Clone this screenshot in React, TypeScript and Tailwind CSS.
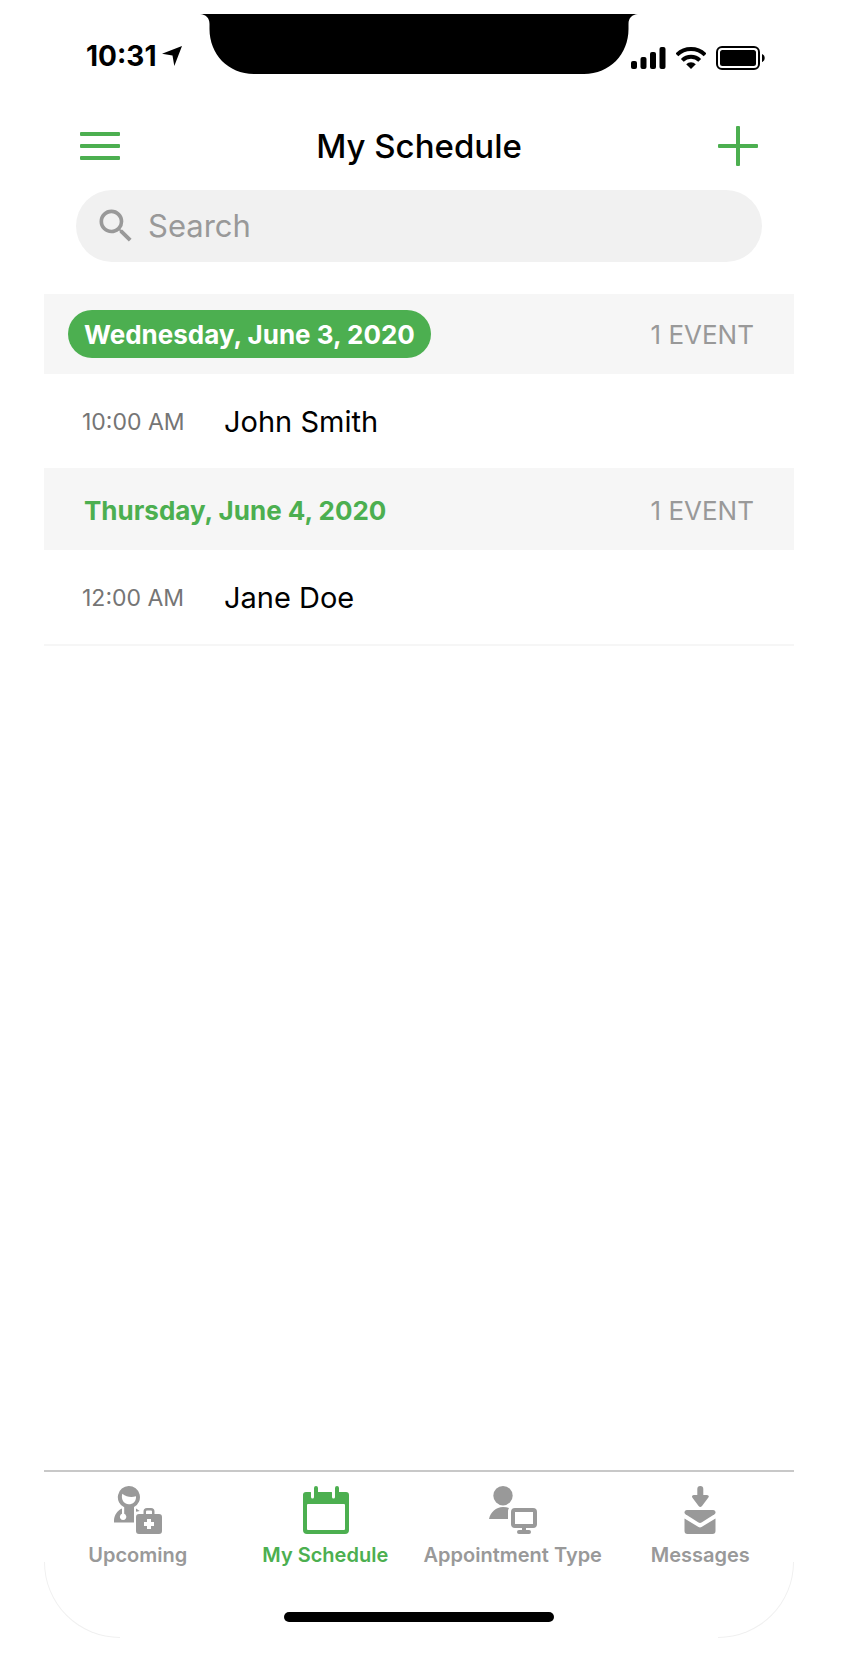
import type { ReactNode } from "react";
import { MdSearch } from "react-icons/md";

type Day = { label: string; today: boolean; events: { time: string; name: string }[] };

const days: Day[] = [
  { label: "Wednesday, June 3, 2020", today: true, events: [{ time: "10:00 AM", name: "John Smith" }] },
  { label: "Thursday, June 4, 2020", today: false, events: [{ time: "12:00 AM", name: "Jane Doe" }] },
];

function Notch() {
  return (
    <svg className="absolute top-0 left-1/2 h-[60px] w-[438px] -translate-x-1/2" viewBox="0 0 438 60" aria-hidden="true">
      <path d="M0 0H438C432 .5 428.500 4 428.500 10V15C428.500 40 410 60 384 60H54C28 60 9.500 40 9.500 15V10C9.500 4 6 .5 0 0Z" />
    </svg>
  );
}

function StatusBar() {
  return (
    <div className="relative flex h-20 items-center justify-between pt-1 pr-7 pl-[42px]">
      <Notch />
      <div className="flex items-center gap-1.5">
        <span className="text-[28px] leading-9 font-bold">10:31</span>
        <svg width="20" height="20" viewBox="0 0 20 20" aria-label="Location in use">
          <path d="M20 0 12.300 20 10.500 9.500 0 7.700Z" />
        </svg>
      </div>
      <div className="flex items-center gap-2.5 pt-1">
        <svg width="35" height="22" viewBox="0 0 35 22" aria-label="Signal">
          <rect x="0" y="14" width="6" height="8" rx="2" />
          <rect x="9.500" y="10" width="6" height="12" rx="2" />
          <rect x="19" y="5" width="6" height="17" rx="2" />
          <rect x="28.500" y="0" width="6" height="22" rx="2" />
        </svg>
        <svg width="30" height="22" viewBox="0 0 30 22" aria-label="Wi-Fi">
          <g fill="none" stroke="#000" strokeWidth="4">
            <path d="M.9 7.900A20 20 0 0 1 29.100 7.900" />
            <path d="M6.300 13.300A12.300 12.300 0 0 1 23.700 13.300" />
          </g>
          <path d="M15 22 10.200 17.300A6.800 6.800 0 0 1 19.800 17.300Z" />
        </svg>
        <svg width="50" height="24" viewBox="0 0 50 24" aria-label="Battery">
          <rect x="1" y="1" width="42" height="22" rx="5" fill="none" stroke="#000" strokeWidth="2" />
          <rect x="4" y="4" width="36" height="16" rx="2.500" />
          <path d="M46 8C47.800 8.700 48.700 10.200 48.700 12S47.800 15.300 46 16Z" />
        </svg>
      </div>
    </div>
  );
}

function DoctorIcon() {
  return (
    <svg width="48" height="48" viewBox="0 0 48 48" fill="currentColor" aria-hidden="true">
      <path
        fillRule="evenodd"
        d="M14.700 0A11.200 11.200 0 0 1 20 21.100V36.500H0V34C.3 29 3.300 24.500 8 22.500V27.800A3.200 3.200 0 1 0 10.200 27.800V21.300A11.200 11.200 0 0 1 14.700 0ZM8.300 7.700C6.800 13 9.500 18.300 14.700 18.300C19.500 18.300 22.300 14.800 22 10.300C17 11.800 12.500 11 8.300 7.700Z"
      />
      <path d="M22 22.500 25.700 25 22 25.700Z" />
      <path
        fillRule="evenodd"
        d="M25 28H29.500V25.500Q29.500 22 33 22H37Q40.500 22 40.500 25.500V28H45Q48 28 48 31V45Q48 48 45 48H25Q22 48 22 45V31Q22 28 25 28ZM32 28H38V25.500Q38 24.500 37 24.500H33Q32 24.500 32 25.500ZM33 33V36H30V40H33V43H37V40H40V36H37V33Z"
      />
    </svg>
  );
}

function CalendarIcon() {
  return (
    <svg width="48" height="48" viewBox="-1 0 48 48" fill="currentColor" aria-hidden="true">
      <path
        fillRule="evenodd"
        d="M4 6H8.500Q9 6 9 6.500V11A1.500 1.500 0 0 0 12 11V2A2 2 0 0 1 16 2V6H29.500Q30 6 30 6.500V11A1.500 1.500 0 0 0 33 11V2A2 2 0 0 1 37 2V6H44Q47 6 47 9V44Q47 48 43 48H5Q1 48 1 44V9Q1 6 4 6ZM5 19V43Q5 44 6 44H42Q43 44 43 43V19Q43 18 42 18H6Q5 18 5 19Z"
      />
    </svg>
  );
}

function AppointmentIcon() {
  return (
    <svg width="48" height="48" viewBox="0 0 48 48" fill="currentColor" aria-hidden="true">
      <circle cx="14" cy="9.700" r="9.700" />
      <path d="M0 33C1.500 26 7 21 14 21Q17.500 21 20 22Q19 23.500 19 25V33Z" />
      <rect x="24" y="24" width="22" height="16" rx="2" fill="none" stroke="currentColor" strokeWidth="4" />
      <path d="M33 41H37V44H40A2 2 0 0 1 40 48H30A2 2 0 0 1 30 44H33Z" />
    </svg>
  );
}

function MessagesIcon() {
  return (
    <svg width="48" height="48" viewBox="0 0 48 48" fill="currentColor" aria-hidden="true">
      <path d="M24.300 0Q27.300 0 27.300 3V9H31Q34 9.500 32 12L26 20Q24.300 22 22.600 20L16.600 12Q15 9.500 17.600 9H21.300V3Q21.300 0 24.300 0Z" />
      <path d="M11 24H37Q39.500 24 39.500 26.500Q39.500 27.500 38.500 28.200L25.500 36.500Q24 37.300 22.500 36.500L9.500 28.200Q8.500 27.500 8.500 26.500Q8.500 24 11 24Z" />
      <path d="M8.500 32.500 22.500 41Q24 41.800 25.500 41L39.500 32.500V45Q39.500 48 36.500 48H11.500Q8.500 48 8.500 45Z" />
    </svg>
  );
}

const tabs: { label: string; icon: ReactNode; active?: boolean }[] = [
  { label: "Upcoming", icon: <DoctorIcon /> },
  { label: "My Schedule", icon: <CalendarIcon />, active: true },
  { label: "Appointment Type", icon: <AppointmentIcon /> },
  { label: "Messages", icon: <MessagesIcon /> },
];

export default function App() {
  return (
    <div className="flex min-h-screen flex-col bg-white pt-3.5 pr-12 pb-7 pl-11 font-['Inter',sans-serif] text-black">
      <div className="relative flex flex-1 flex-col">
        <StatusBar />

        <header className="flex h-24 items-center justify-between px-9 pt-2">
          <button type="button" aria-label="Menu" className="flex w-10 flex-col gap-2 text-[#4caf50]">
            <span className="h-1 w-full rounded-[1px] bg-current" />
            <span className="h-1 w-full rounded-[1px] bg-current" />
            <span className="h-1 w-full rounded-[1px] bg-current" />
          </button>
          <h1 className="text-[33px] leading-10 font-medium">My Schedule</h1>
          <button type="button" aria-label="Add appointment" className="text-[#4caf50]">
            <svg width="40" height="40" viewBox="0 0 40 40" fill="currentColor" aria-hidden="true">
              <rect x="0" y="18" width="40" height="4" rx="1" />
              <rect x="18" y="0" width="4" height="40" rx="1" />
            </svg>
          </button>
        </header>

        <label className="mx-8 flex h-[72px] items-center gap-2.5 rounded-full bg-[#f1f1f1] px-[18px] text-[#999]">
          <MdSearch size={44} aria-hidden="true" />
          <input
            type="search"
            aria-label="Search"
            placeholder="Search"
            className="min-w-0 flex-1 bg-transparent text-[31px] leading-9 outline-none placeholder:text-[#999]"
          />
        </label>

        <main className="mt-8 flex-1">
          {days.map((day) => (
            <section key={day.label}>
              <div className="flex h-20 items-center justify-between bg-[#f6f6f6] pr-10 pl-6 text-[26px] leading-8">
                <h2
                  className={
                    day.today
                      ? "flex h-12 items-center rounded-full bg-[#4caf50] px-4 pt-0.5 font-bold text-white"
                      : "flex h-12 items-center px-4 pt-0.5 font-bold text-[#4caf50]"
                  }
                >
                  {day.label}
                </h2>
                <span className="pt-0.5 text-[#999]">{day.events.length} EVENT</span>
              </div>
              <ul>
                {day.events.map((event) => (
                  <li key={event.name} className="flex h-24 items-center border-b-2 border-[#f6f6f6] pt-0.5 pl-[38px]">
                    <time className="w-[142px] text-[23px] leading-7 text-[#757575]">{event.time}</time>
                    <span className="text-[29px] leading-9">{event.name}</span>
                  </li>
                ))}
              </ul>
            </section>
          ))}
        </main>

        <nav className="grid grid-cols-4 border-t-2 border-[#c8c8c8] pt-3.5">
          {tabs.map((tab) => (
            <a
              key={tab.label}
              href="#"
              aria-current={tab.active ? "page" : undefined}
              className={
                tab.active
                  ? "flex flex-col items-center gap-2 text-xl leading-[26px] font-semibold whitespace-nowrap text-[#4caf50]"
                  : "flex flex-col items-center gap-2 text-xl leading-[26px] font-semibold whitespace-nowrap text-[#999]"
              }
            >
              {tab.icon}
              {tab.label}
            </a>
          ))}
        </nav>
        <div className="mt-11 mb-4 h-2.5 w-[270px] self-center rounded-full bg-black" />

        <div className="pointer-events-none absolute bottom-0 left-0 size-[76px] rounded-bl-full border-b border-l border-[#f0f0f0]" />
        <div className="pointer-events-none absolute right-0 bottom-0 size-[76px] rounded-br-full border-r border-b border-[#f0f0f0]" />
      </div>
    </div>
  );
}
